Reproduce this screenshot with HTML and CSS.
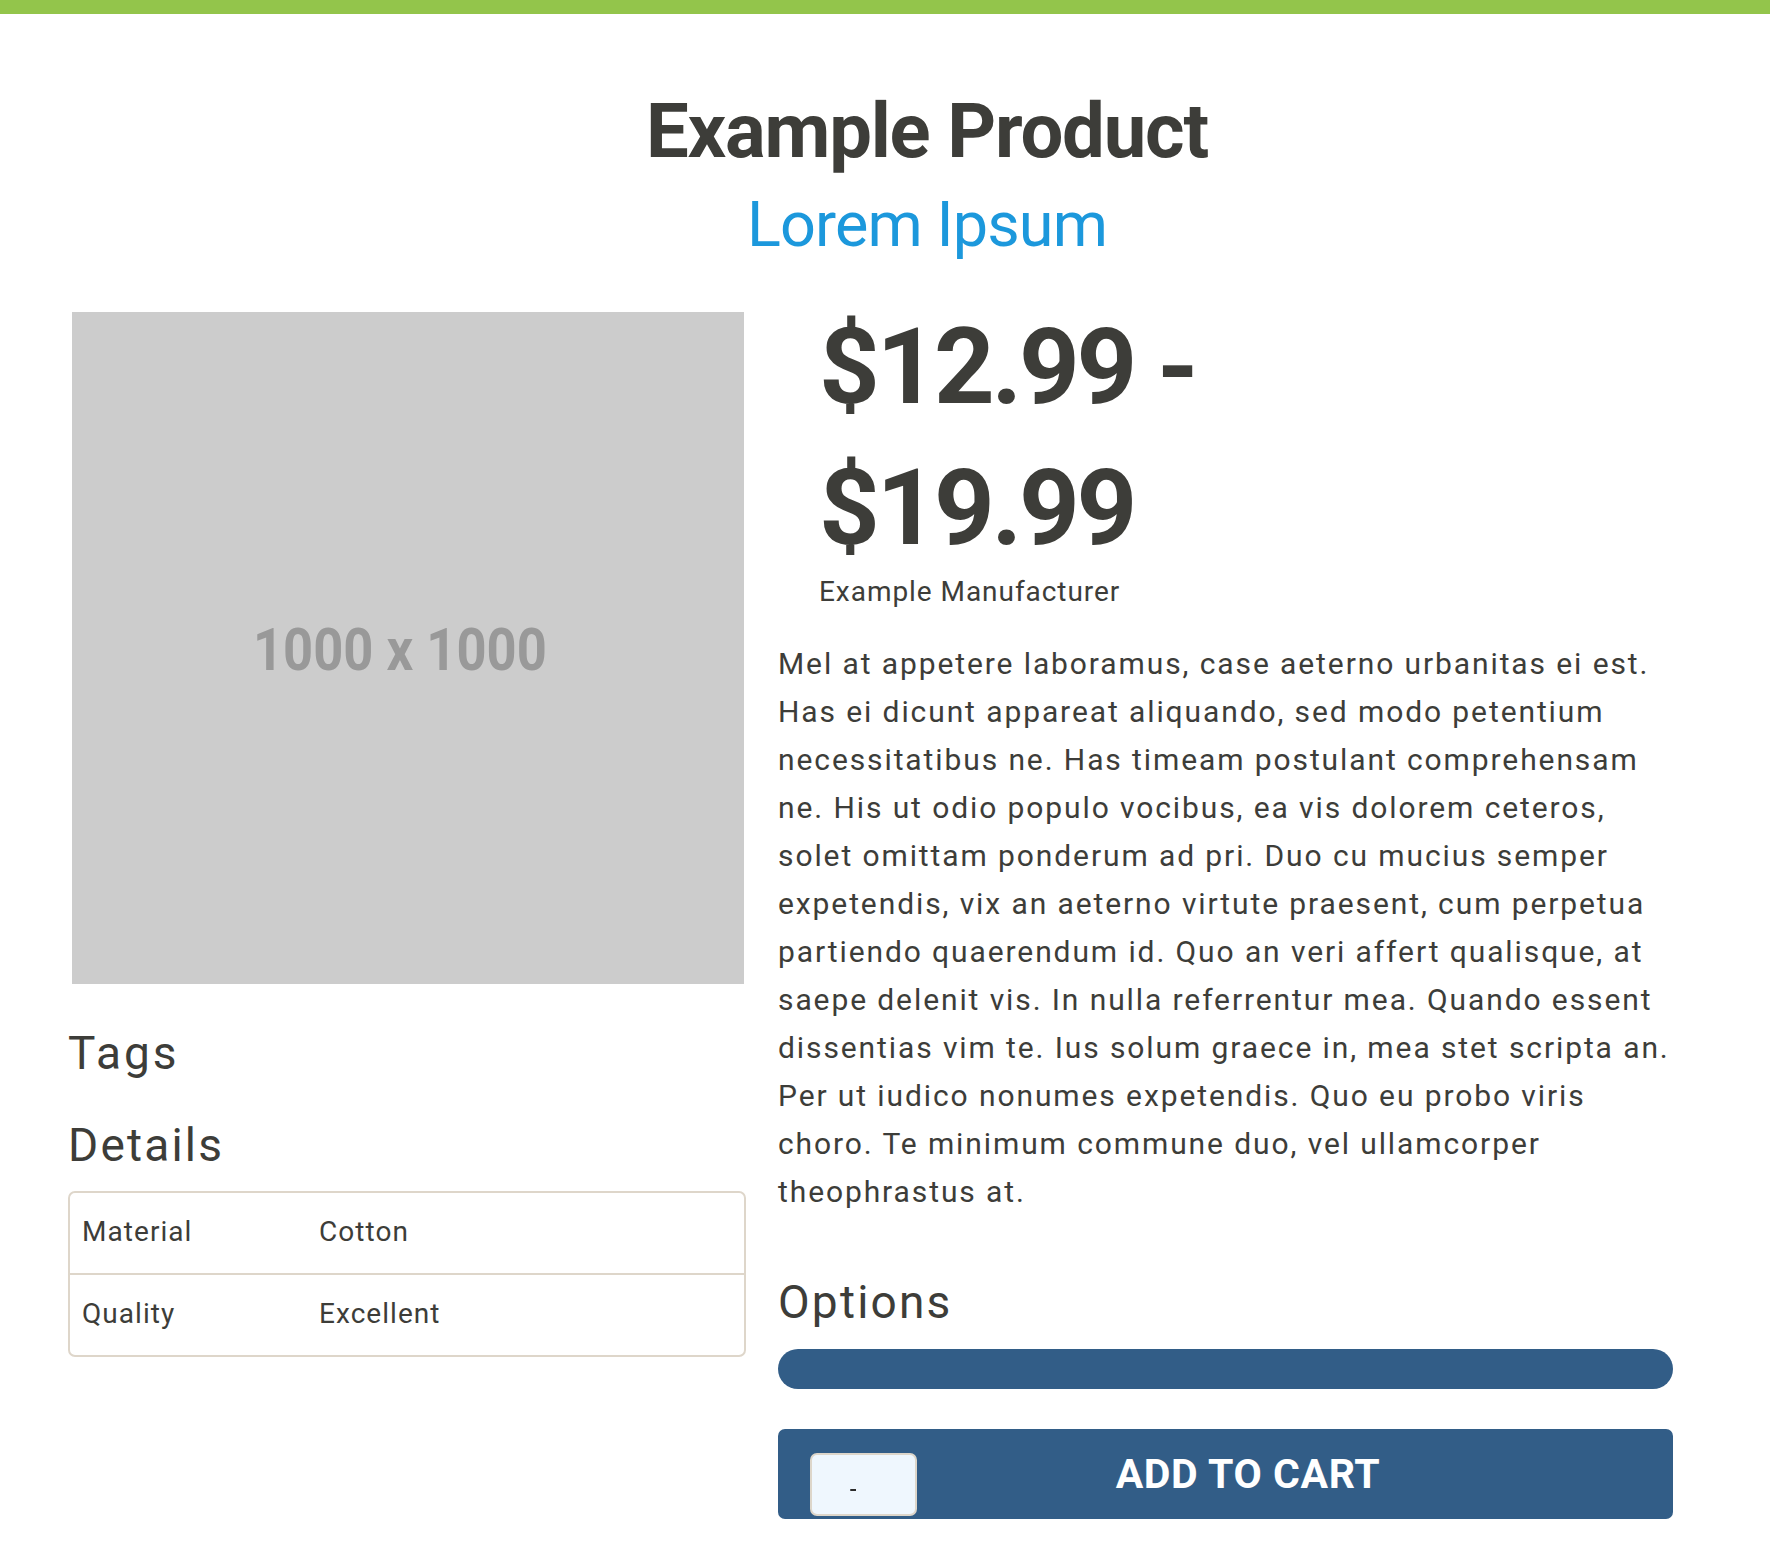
FILE: index.html
```html
<!DOCTYPE html>
<html lang="en">
<head>
<meta charset="utf-8">
<title>Example Product</title>
<link rel="stylesheet" href="styles.css">
</head>
<body>
<div class="topbar"></div>
<header class="product-header">
  <h1 class="product-title">Example Product</h1>
  <h2 class="product-subtitle">Lorem Ipsum</h2>
</header>
<main class="product">
  <section class="col-left">
    <div class="placeholder"><span class="placeholder-text">1000 x 1000</span></div>
    <h3 class="section-title tags-title">Tags</h3>
    <h3 class="section-title details-title">Details</h3>
    <div class="details">
      <div class="details-row">
        <span class="details-key">Material</span>
        <span class="details-val">Cotton</span>
      </div>
      <div class="details-row">
        <span class="details-key">Quality</span>
        <span class="details-val">Excellent</span>
      </div>
    </div>
  </section>
  <section class="col-right">
    <div class="price-block">
      <div class="price">$12.99 - $19.99</div>
      <div class="manufacturer">Example Manufacturer</div>
    </div>
    <p class="description">Mel at appetere laboramus, case aeterno urbanitas ei est. Has ei dicunt appareat aliquando, sed modo petentium necessitatibus ne. Has timeam postulant comprehensam ne. His ut odio populo vocibus, ea vis dolorem ceteros, solet omittam ponderum ad pri. Duo cu mucius semper expetendis, vix an aeterno virtute praesent, cum perpetua partiendo quaerendum id. Quo an veri affert qualisque, at saepe delenit vis. In nulla referrentur mea. Quando essent dissentias vim te. Ius solum graece in, mea stet scripta an. Per ut iudico nonumes expetendis. Quo eu probo viris choro. Te minimum commune duo, vel ullamcorper theophrastus at.</p>
    <h3 class="section-title options-title">Options</h3>
    <div class="options-bar"></div>
    <div class="cart-button">
      <div class="qty"><span class="qty-mark"></span></div>
      <span class="cart-label">ADD TO CART</span>
    </div>
  </section>
</main>
</body>
</html>
```
FILE: styles.css
```css
html, body {
  margin: 0;
  padding: 0;
  background: #ffffff;
}
body {
  font-family: Roboto, "Liberation Sans", Arial, sans-serif;
  color: #3d3d39;
}
.topbar {
  height: 14px;
  background: #93c54b;
}
.product-header {
  padding-left: 84px;
  text-align: center;
}
.product-title {
  margin: 72px 0 0;
  font-size: 76px;
  line-height: 90px;
  font-weight: 700;
  letter-spacing: -1.2px;
  color: #3d3d39;
}
.product-subtitle {
  margin: 11px 0 0;
  font-size: 63px;
  line-height: 76px;
  font-weight: 400;
  letter-spacing: -0.9px;
  color: #1c98dc;
}
.product {
  display: flex;
  gap: 32px;
  padding-left: 68px;
  margin-top: 34px;
  align-items: flex-start;
}
.col-left {
  flex: 0 0 678px;
  min-width: 0;
  padding-top: 15px;
}
.col-right {
  flex: 0 0 895px;
  min-width: 0;
}
.placeholder {
  width: 672px;
  height: 672px;
  margin-left: 4px;
  background: #cccccc;
  display: flex;
  align-items: center;
  justify-content: center;
}
.placeholder-text {
  display: inline-block;
  font-size: 60px;
  font-weight: 700;
  color: #999999;
  transform: scaleX(0.875);
  margin-left: -16px;
  margin-top: 2px;
}
.section-title {
  margin: 0;
  font-size: 46px;
  line-height: 54px;
  font-weight: 400;
  letter-spacing: 2.2px;
  color: #3d3d39;
}
.tags-title {
  margin-top: 42px;
  letter-spacing: 3px;
}
.details-title {
  margin-top: 38px;
}
.details {
  margin-top: 19px;
  border: 2px solid #ded6ca;
  border-radius: 7px;
}
.details-row {
  display: flex;
  padding: 22px 12px 24px;
  font-size: 28px;
  line-height: 34px;
  letter-spacing: 1.05px;
}
.details-row + .details-row {
  border-top: 2px solid #ded6ca;
}
.details-key {
  width: 237px;
}
.price-block {
  padding-left: 41px;
}
.price {
  width: 480px;
  font-size: 106px;
  line-height: 141px;
  font-weight: 700;
  letter-spacing: -3.3px;
  color: #3d3d39;
}
.manufacturer {
  font-size: 28px;
  line-height: 26px;
  letter-spacing: 0.95px;
}
.description {
  margin: 35px 0 0;
  font-size: 30px;
  line-height: 48px;
  letter-spacing: 1.9px;
}
.options-title {
  margin-top: 59px;
}
.options-bar {
  margin-top: 20px;
  height: 40px;
  border-radius: 20px;
  background: #325d87;
}
.cart-button {
  margin-top: 40px;
  height: 90px;
  border-radius: 7px;
  background: #325d87;
  display: flex;
  align-items: center;
  padding-left: 32px;
}
.qty {
  align-self: flex-end;
  margin-bottom: 3px;
  width: 103px;
  height: 59px;
  background: #eff7fe;
  border: 2px solid #ddd6ca;
  border-radius: 7px;
  position: relative;
}
.qty-mark {
  position: absolute;
  left: 38px;
  top: 34px;
  width: 6px;
  height: 2px;
  background: #2b2b2b;
  border-radius: 1px 0 0 1px;
}
.cart-label {
  flex: 1;
  text-align: center;
  padding-right: 94px;
  color: #ffffff;
  font-size: 41px;
  font-weight: 700;
  line-height: 48px;
  letter-spacing: 0.6px;
}
```
